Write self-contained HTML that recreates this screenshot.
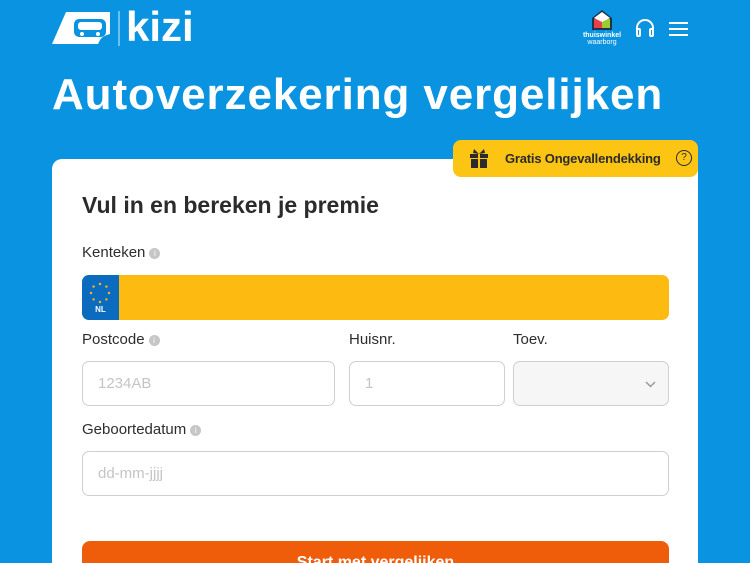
<!DOCTYPE html>
<html><head><meta charset="utf-8"><style>
*{margin:0;padding:0;box-sizing:border-box}
html,body{width:750px;height:563px;overflow:hidden}
body{background:#0a93e0;font-family:"Liberation Sans",sans-serif;position:relative}
.abs{position:absolute}
h1{position:absolute;left:52px;top:70px;color:#fff;font-size:44px;font-weight:bold;letter-spacing:0.9px}
.card{position:absolute;left:52px;top:159px;width:646px;height:420px;background:#fff;border-radius:10px}
.badge{position:absolute;left:453px;top:140px;width:245px;height:37px;background:#fdc513;border-radius:8px;color:#2b2b2b;font-size:13px;font-weight:bold}
.lbl{position:absolute;font-size:15px;color:#2d2d2d}
.i{display:inline-block;width:11px;height:11px;border-radius:50%;background:#c6c6c6;color:#fff;font-size:8px;text-align:center;line-height:11px;vertical-align:1px;margin-left:4px}
.inp{position:absolute;border:1px solid #cfcfcf;border-radius:7px;height:45px;color:#c4c4c4;font-size:15px;padding:13px 15px}
</style></head><body>
<svg class="abs" style="left:52px;top:10px" width="62" height="36" viewBox="0 0 62 36">
<path d="M14 2H58V24Q50 26 48 30L46 34H0Z" fill="#fff"/>
<rect x="22" y="9" width="32" height="18" rx="5" fill="#0a93e0"/>
<rect x="26" y="12" width="24" height="8" rx="3" fill="#fff"/>
<circle cx="30" cy="24" r="2" fill="#fff"/><circle cx="46" cy="24" r="2" fill="#fff"/>
</svg>
<div class="abs" style="left:118px;top:11px;width:2px;height:35px;background:#6cc0ef"></div>
<div class="abs" style="left:126px;top:5px;color:#fff;font-size:42px;line-height:44px;font-weight:bold;letter-spacing:0px">kizi</div>
<svg class="abs" style="left:590px;top:9px" width="24" height="22" viewBox="0 0 24 22"><path d="M2 9L12 1L22 9V21H2Z" fill="#1a3550"/><path d="M4 10H12V19H4Z" fill="#e8404b"/><path d="M12 10H20V19H12Z" fill="#9ccc2d"/><path d="M4 9L12 3L20 9L12 13Z" fill="#fff"/></svg>
<div class="abs" style="left:580px;top:32px;width:44px;text-align:center;color:#fff;font-size:7px;font-weight:bold;line-height:7px">thuiswinkel<br><span style="font-weight:normal">waarborg</span></div>
<svg class="abs" style="left:634px;top:18px" width="22" height="20" viewBox="0 0 22 20" fill="none" stroke="#fff" stroke-width="2"><path d="M3 14V10A8 8 0 0 1 19 10V14"/><rect x="3" y="11" width="3" height="7" rx="1"/><rect x="16" y="11" width="3" height="7" rx="1"/></svg>
<svg class="abs" style="left:669px;top:21px" width="20" height="16" stroke="#fff" stroke-width="2"><path d="M0 2H19M0 8H19M0 14H19"/></svg>
<h1>Autoverzekering vergelijken</h1>
<div class="card">
<div class="abs" style="left:30px;top:33px;font-size:23px;font-weight:bold;color:#2b2b2b">Vul in en bereken je premie</div>
<div class="lbl" style="left:30px;top:85px">Kenteken<span class="i">i</span></div>
<div class="abs" style="left:30px;top:116px;width:587px;height:45px;background:#fdbb12;border-radius:7px;overflow:hidden"><div style="width:37px;height:45px;background:#0b6bbf;position:relative"><svg style="position:absolute;left:7px;top:7px" width="22" height="22"><g fill="#fdbb12"><circle cx="11" cy="2" r="1.2"/><circle cx="11" cy="20" r="1.2"/><circle cx="2" cy="11" r="1.2"/><circle cx="20" cy="11" r="1.2"/><circle cx="4.6" cy="4.6" r="1.2"/><circle cx="17.4" cy="4.6" r="1.2"/><circle cx="4.6" cy="17.4" r="1.2"/><circle cx="17.4" cy="17.4" r="1.2"/></g></svg><div style="position:absolute;left:0;width:37px;top:30px;text-align:center;color:#fff;font-size:8px;font-weight:bold">NL</div></div></div>
<div class="lbl" style="left:30px;top:172px">Postcode<span class="i">i</span></div>
<div class="lbl" style="left:297px;top:172px">Huisnr.</div>
<div class="lbl" style="left:461px;top:172px">Toev.</div>
<div class="inp" style="left:30px;top:202px;width:253px">1234AB</div>
<div class="inp" style="left:297px;top:202px;width:156px">1</div>
<div class="inp" style="left:461px;top:202px;width:156px;background:#f6f6f6"><svg style="position:absolute;right:12px;top:19px" width="11" height="7" fill="none" stroke="#999" stroke-width="1.5"><path d="M1 1L5.5 5.5L10 1"/></svg></div>
<div class="lbl" style="left:30px;top:262px">Geboortedatum<span class="i">i</span></div>
<div class="inp" style="left:30px;top:292px;width:587px">dd-mm-jjjj</div>
<div class="abs" style="left:30px;top:382px;width:587px;height:50px;background:#f05d0a;border-radius:8px;color:#fff;font-weight:bold;font-size:16px;text-align:center;padding-top:13px">Start met vergelijken</div>
</div>
<div class="badge">
<svg class="abs" style="left:17px;top:9px" width="18" height="19" viewBox="0 0 18 19" fill="#2b2b2b"><rect x="0" y="5" width="18" height="4"/><rect x="1" y="10" width="16" height="9"/><rect x="8" y="5" width="2" height="14" fill="#fdc513"/><path d="M9 5L4 0L3 4ZM9 5L14 0L15 4Z"/></svg>
<div class="abs" style="left:52px;top:11px;letter-spacing:-0.2px">Gratis Ongevallendekking</div>
<div class="abs" style="left:223px;top:10px;width:16px;height:16px;border:1.3px solid #2b2b2b;border-radius:50%;font-size:10px;text-align:center;line-height:14px;font-weight:normal">?</div>
</div>
</body></html>
